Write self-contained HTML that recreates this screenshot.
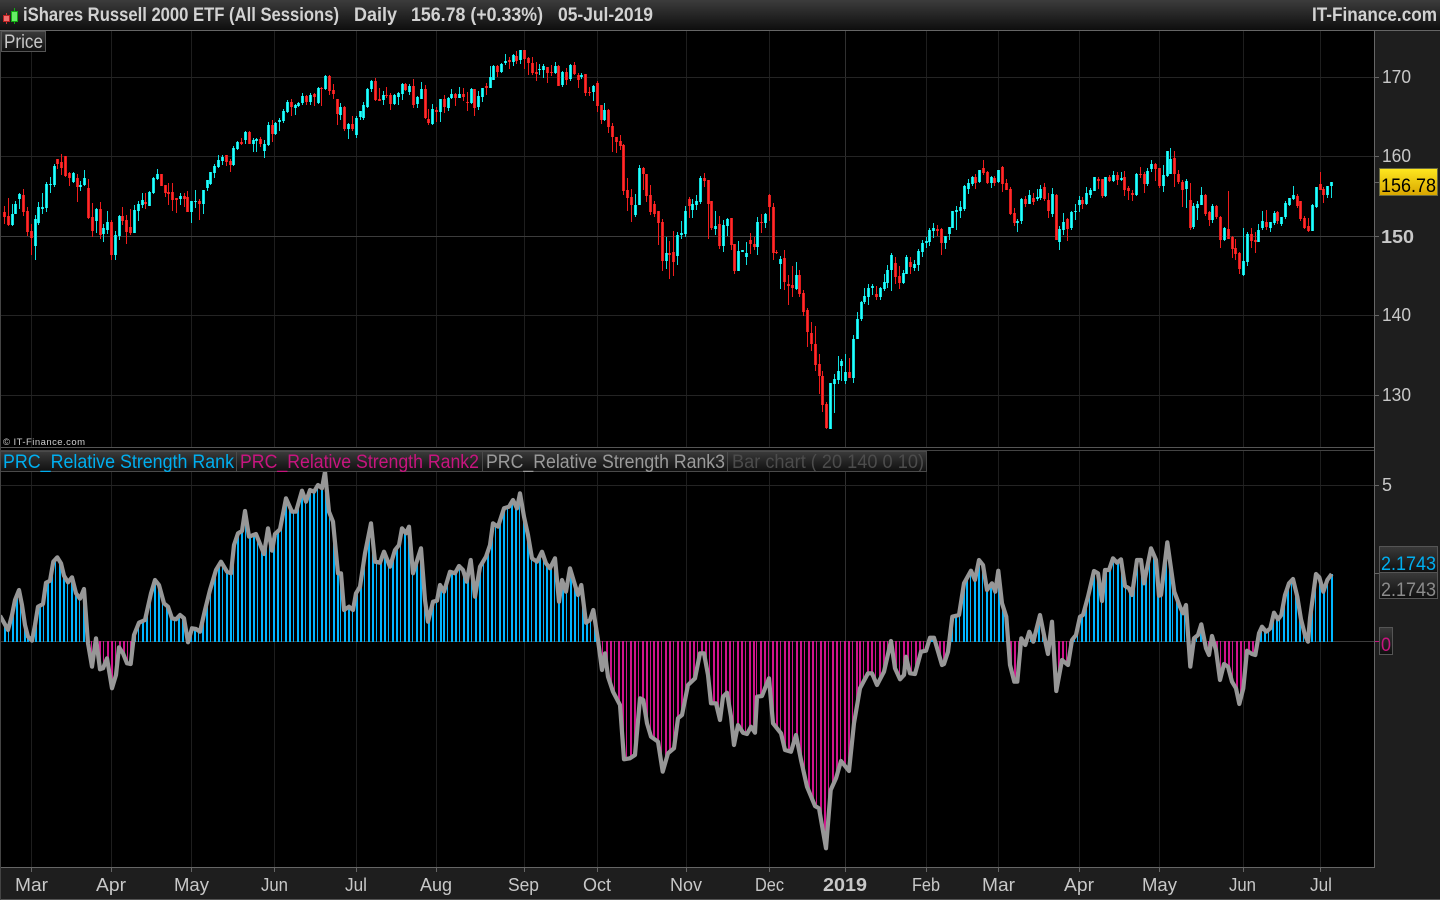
<!DOCTYPE html>
<html><head><meta charset="utf-8"><title>iShares Russell 2000 ETF</title>
<style>
html,body{margin:0;padding:0;background:#000;width:1440px;height:900px;overflow:hidden}
svg{display:block;position:absolute;left:0;top:0}
text{font-family:"Liberation Sans",sans-serif}
</style></head><body>
<svg width="1440" height="900" viewBox="0 0 1440 900" xmlns="http://www.w3.org/2000/svg">
<defs>
<linearGradient id="tb" x1="0" y1="0" x2="0" y2="1"><stop offset="0" stop-color="#3c3c3c"/><stop offset="1" stop-color="#0e0e0e"/></linearGradient>
<linearGradient id="tab" x1="0" y1="0" x2="0" y2="1"><stop offset="0" stop-color="#3a3a3a"/><stop offset="1" stop-color="#0f0f0f"/></linearGradient>
<linearGradient id="yl" x1="0" y1="0" x2="0" y2="1"><stop offset="0" stop-color="#ffe81f"/><stop offset="1" stop-color="#d8a500"/></linearGradient>
</defs>
<rect width="1440" height="900" fill="#000"/>
<g shape-rendering="crispEdges">
<rect x="1375" y="31" width="65" height="869" fill="#1e1e1e"/>
<rect x="0" y="868" width="1440" height="32" fill="#1e1e1e"/>
<g fill="#1e1e1e">
<rect x="31" y="31" width="1" height="836"/><rect x="111" y="31" width="1" height="836"/><rect x="191" y="31" width="1" height="836"/><rect x="274" y="31" width="1" height="836"/><rect x="356" y="31" width="1" height="836"/><rect x="436" y="31" width="1" height="836"/><rect x="524" y="31" width="1" height="836"/><rect x="597" y="31" width="1" height="836"/><rect x="686" y="31" width="1" height="836"/><rect x="769" y="31" width="1" height="836"/><rect x="926" y="31" width="1" height="836"/><rect x="998" y="31" width="1" height="836"/><rect x="1079" y="31" width="1" height="836"/><rect x="1159" y="31" width="1" height="836"/><rect x="1243" y="31" width="1" height="836"/><rect x="1320" y="31" width="1" height="836"/>
</g>
<rect x="845" y="31" width="1" height="836" fill="#303030"/>
<g fill="#242424">
<rect x="0" y="77" width="1375" height="1"/><rect x="0" y="156" width="1375" height="1"/><rect x="0" y="315" width="1375" height="1"/><rect x="0" y="395" width="1375" height="1"/><rect x="0" y="485" width="1375" height="1"/>
</g>
<rect x="0" y="236" width="1375" height="1" fill="#3c3c3c"/>
<rect x="0" y="641" width="1375" height="1" fill="#3c3c3c"/>
</g>
<g id="hist" shape-rendering="crispEdges"></g>
<g id="candles" shape-rendering="crispEdges"></g>
<polyline id="line" fill="none" stroke="#979797" stroke-width="4.2" stroke-linejoin="round" points=""/>
<g shape-rendering="crispEdges">
<rect x="0" y="0" width="1440" height="30" fill="url(#tb)"/>
<rect x="0" y="30" width="1440" height="1" fill="#666"/>
<rect x="0" y="447" width="1375" height="4" fill="#000"/>
<rect x="0" y="447" width="1375" height="1" fill="#555"/>
<rect x="0" y="450" width="1375" height="1" fill="#444"/>
<rect x="1374" y="31" width="1" height="837" fill="#666"/>
<rect x="0" y="867" width="1375" height="1" fill="#666"/>
<rect x="0" y="899" width="1440" height="1" fill="#555"/>
<rect x="0" y="31" width="1" height="869" fill="#444"/>
<rect x="1.5" y="31.5" width="44" height="20" fill="url(#tab)" stroke="#555"/>
<rect x="0.5" y="451.5" width="236" height="20" fill="url(#tab)" stroke="#4a4a4a"/>
<rect x="236.5" y="451.5" width="246" height="20" fill="url(#tab)" stroke="#4a4a4a"/>
<rect x="482.5" y="451.5" width="245" height="20" fill="url(#tab)" stroke="#4a4a4a"/>
<rect x="727.5" y="451.5" width="199" height="20" fill="url(#tab)" stroke="#4a4a4a"/>
<g fill="#666">
<rect x="1375" y="77" width="4" height="1"/><rect x="1375" y="156" width="4" height="1"/><rect x="1375" y="182" width="4" height="1"/><rect x="1375" y="236" width="4" height="1"/><rect x="1375" y="315" width="4" height="1"/><rect x="1375" y="395" width="4" height="1"/><rect x="1375" y="485" width="4" height="1"/><rect x="1375" y="573" width="4" height="1"/>
<rect x="31" y="868" width="1" height="4"/><rect x="111" y="868" width="1" height="4"/><rect x="191" y="868" width="1" height="4"/><rect x="274" y="868" width="1" height="4"/><rect x="356" y="868" width="1" height="4"/><rect x="436" y="868" width="1" height="4"/><rect x="524" y="868" width="1" height="4"/><rect x="597" y="868" width="1" height="4"/><rect x="686" y="868" width="1" height="4"/><rect x="769" y="868" width="1" height="4"/><rect x="845" y="868" width="1" height="4"/><rect x="926" y="868" width="1" height="4"/><rect x="998" y="868" width="1" height="4"/><rect x="1079" y="868" width="1" height="4"/><rect x="1159" y="868" width="1" height="4"/><rect x="1243" y="868" width="1" height="4"/><rect x="1320" y="868" width="1" height="4"/>
</g>
<rect x="1375" y="641" width="4" height="1" fill="#c7157f"/>
<rect x="1379.5" y="168.5" width="58" height="27" fill="url(#yl)" stroke="#6b6b40"/>
<rect x="1379.5" y="546.5" width="58" height="26" fill="url(#tab)" stroke="#555"/>
<rect x="1379.5" y="572.5" width="58" height="26" fill="url(#tab)" stroke="#555"/>
<rect x="1379.5" y="627.5" width="13" height="27" fill="url(#tab)" stroke="#555"/>
<!-- logo -->
<rect x="6" y="13" width="1" height="11" fill="#c33"/>
<rect x="3.5" y="15.5" width="6" height="6" fill="#f07070" stroke="#b22"/>
<rect x="14" y="8" width="1" height="16" fill="#1a1"/>
<rect x="11.5" y="11.5" width="6" height="10" fill="#66ee66" stroke="#1a1"/>
</g>
<g fill="#d2d2d2" font-size="19" font-weight="bold">
<text x="23" y="21" textLength="316" lengthAdjust="spacingAndGlyphs">iShares Russell 2000 ETF (All Sessions)</text>
<text x="354" y="21" textLength="43" lengthAdjust="spacingAndGlyphs">Daily</text>
<text x="411" y="21" textLength="132" lengthAdjust="spacingAndGlyphs">156.78 (+0.33%)</text>
<text x="558" y="21" textLength="95" lengthAdjust="spacingAndGlyphs">05-Jul-2019</text>
<text x="1312" y="21" textLength="125" lengthAdjust="spacingAndGlyphs">IT-Finance.com</text>
</g>
<text x="4" y="48" font-size="19" fill="#c8c8c8" textLength="39" lengthAdjust="spacingAndGlyphs">Price</text>
<text x="3" y="445" font-size="9.5" fill="#cfcfcf" textLength="82" lengthAdjust="spacing">© IT-Finance.com</text>
<g font-size="19">
<text x="3" y="468" fill="#00aeef" textLength="231" lengthAdjust="spacingAndGlyphs">PRC_Relative Strength Rank</text>
<text x="240" y="468" fill="#c7157f" textLength="239" lengthAdjust="spacingAndGlyphs">PRC_Relative Strength Rank2</text>
<text x="486" y="468" fill="#9a9a9a" textLength="239" lengthAdjust="spacingAndGlyphs">PRC_Relative Strength Rank3</text>
<text x="732" y="468" fill="#4c4c4c" textLength="192" lengthAdjust="spacingAndGlyphs">Bar chart ( 20 140 0 10)</text>
</g>
<g font-size="18" fill="#c8c8c8">
<text x="1382" y="83" textLength="29" lengthAdjust="spacingAndGlyphs">170</text>
<text x="1382" y="162" textLength="29" lengthAdjust="spacingAndGlyphs">160</text>
<text x="1381" y="243" font-weight="bold" textLength="33" lengthAdjust="spacingAndGlyphs">150</text>
<text x="1382" y="321" textLength="29" lengthAdjust="spacingAndGlyphs">140</text>
<text x="1382" y="401" textLength="29" lengthAdjust="spacingAndGlyphs">130</text>
<text x="1382" y="491" textLength="10" lengthAdjust="spacingAndGlyphs">5</text>
</g>
<text x="1381" y="192" font-size="19" fill="#000" textLength="55" lengthAdjust="spacingAndGlyphs">156.78</text>
<text x="1381" y="570" font-size="19" fill="#00aeef" textLength="55" lengthAdjust="spacingAndGlyphs">2.1743</text>
<text x="1381" y="596" font-size="19" fill="#8c8c8c" textLength="55" lengthAdjust="spacingAndGlyphs">2.1743</text>
<text x="1381" y="651" font-size="19" fill="#c7157f" textLength="10" lengthAdjust="spacingAndGlyphs">0</text>
<g font-size="18" fill="#c8c8c8">
<text x="15" y="891" textLength="33" lengthAdjust="spacingAndGlyphs">Mar</text>
<text x="96" y="891" textLength="30" lengthAdjust="spacingAndGlyphs">Apr</text>
<text x="174" y="891" textLength="35" lengthAdjust="spacingAndGlyphs">May</text>
<text x="261" y="891" textLength="27" lengthAdjust="spacingAndGlyphs">Jun</text>
<text x="345" y="891" textLength="22" lengthAdjust="spacingAndGlyphs">Jul</text>
<text x="420" y="891" textLength="32" lengthAdjust="spacingAndGlyphs">Aug</text>
<text x="508" y="891" textLength="31" lengthAdjust="spacingAndGlyphs">Sep</text>
<text x="583" y="891" textLength="28" lengthAdjust="spacingAndGlyphs">Oct</text>
<text x="670" y="891" textLength="32" lengthAdjust="spacingAndGlyphs">Nov</text>
<text x="755" y="891" textLength="29" lengthAdjust="spacingAndGlyphs">Dec</text>
<text x="823" y="891" font-weight="bold" textLength="44" lengthAdjust="spacingAndGlyphs">2019</text>
<text x="912" y="891" textLength="28" lengthAdjust="spacingAndGlyphs">Feb</text>
<text x="982" y="891" textLength="33" lengthAdjust="spacingAndGlyphs">Mar</text>
<text x="1064" y="891" textLength="30" lengthAdjust="spacingAndGlyphs">Apr</text>
<text x="1142" y="891" textLength="35" lengthAdjust="spacingAndGlyphs">May</text>
<text x="1229" y="891" textLength="27" lengthAdjust="spacingAndGlyphs">Jun</text>
<text x="1310" y="891" textLength="22" lengthAdjust="spacingAndGlyphs">Jul</text>
</g>
</svg>
<script>
(function(){
var segs=[[0,0,"13R636,650,618,672 25R648,676,594,678 37C642,676,612,678 46C612,642,604,642 58C582,598,578,628 70R585,636,568,648 82R633,696,620,708 94R693,714,672,765 106C657,738,645,780 115C621,669,606,675 127C622,626,579,642 139C552,624,546,636 151C551,554,531,579 163C498,555,492,561 172R478,491,477,507 184R486,504,462,525 196R468,528,468,531 208R519,534,516,558 220C519,546,516,549 232R534,561,522,606 241C555,560,543,573 253C534,555,510,558 265R564,654,537,657 277R651,693,609,711 289C627,662,624,699 301R627,705,606,717 310C684,702,672,726 322C666,690,633,702 334R666,765,660,780 346C705,765,693,780 358C648,708,645,720 367R648,663,621,675 379R660,696,645,732 391R681,699,627,705 403C630,699,615,699 415C612,633,603,663 427C600,615,579,624 436R606,612,579,627 448C576,618,573,618 460C534,579,531,582 472C522,537,507,540 484R522,558,522,558 496R555,579,555,591 505R576,581,549,615 517R576,600,549,633 529R594,599,594,639 541C588,597,579,615 553R588,597,579,621 562R591,636,573,636 574C603,636,603,669 586C603,607,570,624 598R603,612,597,660 610C570,612,570,642 622C540,564,552,573 631C516,552,516,555 643C498,519,492,534 655C480,501,465,504 667C471,483,465,495 679R465,486,465,498 691R483,495,477,516 700C444,495,438,498 712C426,447,423,450 724R426,431,414,435 736C396,420,393,432 748R396,432,393,432 760C420,432,414,456 769C417,423,414,456 781R417,432,411,441 793C432,453,420,474 805C375,435,366,438 817R375,402,360,426 826C369,402,366,405 838C360,366,354,393 850C333,363,327,369 862C306,336,300,339 874R306,321,297,348 886C315,324,312,345 895C309,318,306,321 907C288,309,279,315 919R288,306,285,315 931C285,306,279,315 943R282,291,279,318 955C264,309,261,312 964R264,266,261,318 976C228,267,225,270 988R228,273,225,285 1000R270,282,252,297 1012R297,342,297,375 1021C321,345,309,360 1033R321,387,318,393 1045C372,387,369,417 1057R372,387,348,393 1069C354,405,348,414"],
[360,30,"0C243,262,243,270 10C225,264,216,270 22C178,231,175,234 34C153,178,150,186 46R153,210,144,213 58R208,212,174,213 70C195,210,183,225 79R195,199,171,204 91R195,222,189,240 103C195,222,192,225 115C189,201,186,225 127C162,192,159,210 136R162,180,159,183 148C168,186,162,195 160R168,225,147,234 172C201,222,198,234 184C177,207,156,207 196R177,264,165,267 205R267,279,237,285 217C237,282,222,285 229R240,246,231,276 241C207,246,207,276 253R207,230,195,249 265C204,234,201,243 274C192,204,177,207 286R192,204,189,228 298C192,204,171,204 310R192,201,174,213 322R216,218,186,243 334C177,219,174,222 343R177,234,177,258 355C198,231,183,240 367C174,201,174,216 379R168,174,159,195 391C141,174,108,174 400C108,150,105,150 412R108,126,105,141 424C102,126,99,129 436C93,99,72,105 448R90,96,81,117 460C75,96,72,108 469R78,93,63,102 481C60,90,60,102 493R60,87,60,117 505R84,99,81,135 517R99,129,81,135 529R126,132,96,153 538C117,120,102,135 550C108,120,102,144 562R111,129,111,159 574R126,129,105,138 586C108,129,96,132 595R108,167,105,168 607C126,165,123,171 619R126,150,114,165 631C105,147,102,153 643R105,132,96,135 655R135,150,129,174 664C135,141,129,147 676R132,189,132,198 688R186,189,171,198 700C168,186,165,213 712R159,228,153,246 724R225,270,225,282 733C240,270,219,273 745R240,291,237,309 757R288,321,279,366 769R321,336,321,369 781R333,348,315,360 790R345,483,342,495 802R480,504,444,543 814R501,525,477,576 826C525,555,492,561 838C414,525,405,525 850R414,432,411,480 859R432,498,432,516 871R495,546,465,555 883R522,552,513,561 895R543,579,543,645 907R576,693,567,723 919C669,693,621,717 928R669,675,633,747 940R666,696,603,738 952C615,678,606,705 964C609,615,573,627 976C543,612,528,621 988R507,528,501,564 997C522,540,507,564 1009C513,525,495,540 1021C444,516,438,522 1033R444,453,429,471 1045R450,522,450,627 1054R513,594,513,600 1066C588,597,543,615 1078R582,648,558,657"],
[720,140,"10C255,318,240,336 22C237,258,234,288 34R234,315,234,330 43R312,393,312,402 55C333,393,303,393 67C330,336,330,336 79C339,351,306,375 91R300,312,279,342 103R312,321,291,330 112C246,321,231,345 124R246,249,222,279 136C222,249,219,264 148R165,201,162,243 160R201,339,189,360 169R336,340,330,342 181C357,372,348,447 193R354,426,330,450 205R432,438,405,495 217R435,444,378,471 229C405,447,366,450 238R405,462,390,471 250R459,516,450,528 262R510,576,504,621 274R579,612,546,633 286R612,675,558,693 298R672,708,642,762 307R708,795,693,816 319R792,864,786,867 331C729,867,729,867 343C717,732,702,819 355C693,720,648,732 364C663,678,657,723 376C696,723,642,732 388R696,714,654,714 400C597,714,585,729 412C537,597,516,597 424C486,537,483,543 433C468,486,444,492 445C444,471,432,495 457C438,444,432,465 469R462,471,438,480 481C444,471,441,480 493C426,447,402,453 502C390,429,375,444 514C345,390,339,453 526R369,411,351,432 538R408,429,378,447 550C399,429,390,432 559C351,402,345,402 571R366,381,351,402 583C372,384,360,393 595C333,375,327,393 607C309,336,300,351 619C303,309,291,324 628C270,306,264,318 640C264,273,249,294 652R267,273,255,288 664R267,309,264,345 676C288,309,288,327 688C261,282,261,300 697C213,264,213,264 709C210,216,198,270 721C201,213,183,234 733C138,207,135,213 745C129,147,117,162 757C111,132,108,138 766R111,129,102,147 778C90,126,90,129 790R84,99,60,105 802R96,129,93,132 814C111,129,108,144 823R114,129,108,138 835C90,126,90,129 847R81,132,78,156 859R129,150,117,150 871R147,222,141,225 883R219,249,204,258 892C243,249,237,276 904C177,243,174,252 916R177,192,168,201 928C165,192,150,192 940R174,186,159,195 952C171,178,147,183 961C147,174,135,180 973R141,177,129,183 985R180,213,159,234 997C162,222,144,231 1009R165,300,162,300 1018C267,306,258,330 1030C246,270,219,285 1042R237,267,234,303 1054C216,264,213,270 1066C213,216,192,240 1078C180,195,168,216"],
[1080,0,"7R600,612,591,627 19C579,612,561,615 31C570,585,564,594 43C531,573,531,573 55R537,543,531,567 67R537,588,537,594 76C531,588,531,591 88R531,543,525,546 100C525,543,513,546 112R525,540,516,555 124C534,540,516,543 133R531,570,513,588 145R564,573,558,600 157R579,585,570,603 169C522,585,519,588 181R522,525,501,534 193R522,552,516,579 202C513,552,504,558 214C492,507,480,516 226R492,507,489,543 238R504,558,504,564 250C525,558,495,576 262C453,528,453,531 271C477,522,444,522 283R474,522,453,561 295R522,546,510,552 307R546,570,540,621 319C543,567,537,624 331R600,684,549,690 340C618,681,609,687 352C612,624,603,660 364C585,615,561,615 376R585,642,582,648 388R636,660,633,678 397C618,660,612,669 409R618,651,615,657 421R651,720,648,744 433C684,720,681,723 445R687,717,573,717 457R711,747,708,774 466R744,762,717,780 478R759,807,756,822 490C783,825,684,828 502C702,786,696,798 514R702,723,684,744 526R720,726,696,759 535C690,726,672,726 547C663,684,633,690 559R666,681,630,690 571C666,684,666,696 583C639,669,633,675 592R636,663,633,672 604C651,672,651,678 616C609,651,603,657 628C594,615,594,618 640C585,597,558,600 652R588,618,582,624 661R603,657,603,663 673R654,684,648,687 685R678,693,654,696 697C615,693,612,693 709C561,621,561,624 721R552,570,516,570 730R567,585,561,609 742C558,585,558,594 754C546,558,546,594"]];
var lines=[[0,430,"0,557 12,578 24,600 36,555 45,510 57,480 66,525 75,585 84,620 96,632 105,585 114,530 129,522 138,458 150,452 160,395 172,382 183,400 192,437 204,457 216,442 228,490 240,506 252,477 264,640 276,710 288,625 300,718 309,715 321,685 336,775 348,735 357,652 369,670 381,700 392,702 402,615 417,578 435,570 453,490 465,450 477,465 492,520 504,530 516,565 528,568 540,555 552,565 564,637 576,595 588,597 600,605 615,540 630,480 648,420 663,395 681,425 693,430 702,345 714,310 726,303 735,243 747,320 768,312 792,372 804,295 816,362 825,312 840,298 858,205 876,245 888,245 906,182 918,215 930,180 942,185 954,165 966,175 975,125 987,245 999,275 1014,430 1023,430 1032,540 1047,530 1059,540 1068,490"],
[360,440,"0,440 15,340 33,250 45,365 60,368 72,335 90,380 105,330 117,315 126,265 138,280 147,260 159,400 183,325 195,480 204,545 219,485 231,482 240,435 252,455 270,395 285,400 297,378 309,390 320,425 332,360 345,470 360,380 378,350 390,315 399,250 414,260 432,205 447,200 459,180 471,205 480,160 492,230 504,285 516,355 531,365 546,335 558,370 570,385 585,355 597,485 606,420 618,455 630,385 654,465 664,435 678,548 690,540 700,510 714,600 726,690 735,640 744,710 759,755 780,795 792,958 810,955 825,945 840,775 850,780 861,850 873,890 894,905 908,995 924,940 942,925 954,835 966,825 984,735 1005,715 1020,640 1032,640 1044,705 1053,790 1068,790"],
[720,560,"0,480 9,410 21,398 33,470 42,555 54,495 69,518 81,522 93,500 105,518 111,410 126,408 147,355 159,490 183,520 195,570 213,575 228,525 243,600 261,680 285,738 297,745 318,865 332,690 348,655 363,603 387,633 402,490 420,385 444,340 456,340 471,375 492,335 513,243 525,325 540,358 552,345 558,290 570,340 585,342 603,275 618,272 630,233 642,233 666,315 672,312 684,275 697,170 717,165 732,70 753,32 765,60 777,0 789,15 801,90 816,70 826,95 835,32 846,130 859,170 870,315 883,365 892,365 904,235 916,255 928,215 940,245 960,165 975,240 984,282 996,185 1009,393 1026,300 1044,315 1056,240 1068,225"],
[1080,500,"0,350 9,345 24,290 42,213 54,220 66,303 75,210 87,210 99,175 111,188 123,178 135,258 147,265 156,285 171,180 183,180 192,250 213,145 228,180 237,287 243,285 262,127 283,275 300,320 309,340 318,315 331,500 342,415 354,405 364,373 378,445 387,465 396,408 408,450 420,540 432,492 444,500 456,545 468,565 478,612 490,565 501,452 516,462 526,465 537,400 546,380 559,395 571,385 582,338 594,358 604,345 615,285 627,250 639,237 652,290 663,358 675,405 684,425 690,355 708,222 718,232 730,275 742,240 755,222"]];
var cw="",rw="",co="",ro="",ci="",ri="";
segs.forEach(function(s){s[2].split(" ").forEach(function(t){
 var m=t.match(/^(\d+)([RC])(\d+),(\d+),(\d+),(\d+)$/);if(!m)return;
 var x=Math.round(s[0]+(+m[1])/3-0.5),bt=Math.round(s[1]+m[3]/3),bb=Math.round(s[1]+m[4]/3),wt=Math.round(s[1]+m[5]/3),wb=Math.round(s[1]+m[6]/3);
 if(bb<=bt)bb=bt+1;
 var w="M"+x+" "+wt+"h1V"+wb+"h-1z";
 var o="M"+(x-1)+" "+bt+"h3V"+bb+"h-3z";
 var n="M"+x+" "+bt+"h1V"+bb+"h-1z";
 if(m[2]=="R"){rw+=w;ro+=o;ri+=n}else{cw+=w;co+=o;ci+=n}
})});
function p(d,f){return '<path d="'+d+'" fill="'+f+'"/>'}
document.getElementById("candles").innerHTML=p(rw,"#f01c1c")+p(cw,"#10e0e0")+p(ro,"#e01c1c")+p(co,"#10dcdc")+p(ri,"#ff2c2c")+p(ci,"#28ffff");
var pts=[];
lines.forEach(function(s){s[2].split(" ").forEach(function(t){var a=t.split(",");pts.push([s[0]+a[0]/3,s[1]+a[1]/3])})});
document.getElementById("line").setAttribute("points",pts.map(function(q){return q[0].toFixed(1)+","+q[1].toFixed(1)}).join(" "));
function yat(x){for(var i=1;i<pts.length;i++){if(x<=pts[i][0]){var a=pts[i-1],b=pts[i],d=b[0]-a[0];return d<=0?b[1]:a[1]+(b[1]-a[1])*(x-a[0])/d}}return pts[pts.length-1][1]}
var blue="",mag="",zero=641;
for(var i=0;i<336;i++){
 var x=4.3+3.962*i,xl=Math.round(x-0.6),w=(i%3==1)?1:2,y=Math.round(yat(x+0.5));
 if(y<zero){blue+="M"+xl+" "+y+"h"+w+"V"+(zero+1)+"h-"+w+"z"}
 else{mag+="M"+xl+" "+zero+"h"+w+"V"+Math.max(y,zero+1)+"h-"+w+"z"}
}
document.getElementById("hist").innerHTML=p(blue,"#00b6ff")+p(mag,"#d0148c");
})();
</script>
</body></html>
